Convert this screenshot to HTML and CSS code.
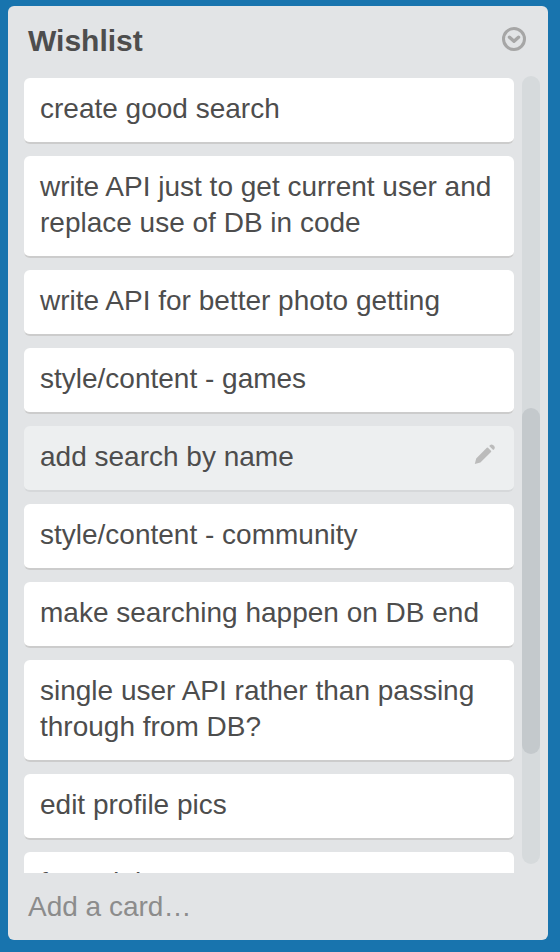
FILE: index.html
```html
<!DOCTYPE html>
<html lang="en">
<head>
<meta charset="utf-8">
<meta name="viewport" content="width=device-width, initial-scale=1">
<title>Wishlist</title>
<link rel="stylesheet" href="styles.css">
</head>
<body>
<section class="list">
  <header class="list-header">
    <h2 class="list-title">Wishlist</h2>
    <button class="icon-button" type="button" aria-label="List actions">
      <svg class="menu-icon" viewBox="0 0 24 24" aria-hidden="true"><circle cx="12" cy="12" r="10.5"/><path d="M7.5 10.2 12 14.2 16.5 10.2"/></svg>
    </button>
  </header>
  <div class="list-body">
    <ul class="cards">
      <li class="card"><a class="card-link" href="#">create good search</a></li>
      <li class="card"><a class="card-link" href="#">write API just to get current user and replace use of DB in code</a></li>
      <li class="card"><a class="card-link" href="#">write API for better photo getting</a></li>
      <li class="card"><a class="card-link" href="#">style/content - games</a></li>
      <li class="card card-active">
        <a class="card-link" href="#">add search by name</a>
        <button class="icon-button edit-button" type="button" aria-label="Edit card">
          <svg class="edit-icon" viewBox="0 0 22 22" aria-hidden="true"><path d="M.8 21 2.2 15.4 12.8 4.8Q13.4 4.2 14 4.8L17 7.8Q17.6 8.4 17 9L6.4 19.4ZM15.2 3 16.2 1.9Q17.6.9 19 1.9L20.2 3.1Q21.4 4.6 20.4 5.9L19.2 6.9Z"/></svg>
        </button>
      </li>
      <li class="card"><a class="card-link" href="#">style/content - community</a></li>
      <li class="card"><a class="card-link" href="#">make searching happen on DB end</a></li>
      <li class="card"><a class="card-link" href="#">single user API rather than passing through from DB?</a></li>
      <li class="card"><a class="card-link" href="#">edit profile pics</a></li>
      <li class="card"><a class="card-link" href="#">form del</a></li>
    </ul>
    <div class="scroll-track"><div class="scroll-thumb"></div></div>
  </div>
  <a class="add-card" href="#">Add a card…</a>
</section>
</body>
</html>
```
FILE: styles.css
```css
* {
  box-sizing: border-box;
}

body {
  display: flex;
  height: 100vh;
  margin: 0;
  padding: 6px 12px 12px 8px;
  background: #1874ae;
  color: #4d4d4d;
  font: 28px/36px "Liberation Sans", Arial, sans-serif;
}

.list {
  display: flex;
  flex: 1;
  flex-direction: column;
  min-width: 0;
  border-radius: 6px;
  background: #e2e4e6;
}

.list-header {
  display: flex;
  align-items: flex-start;
  justify-content: space-between;
  padding: 17px 22px 15px 20px;
}

.list-title {
  margin: 0;
  font-size: 30px;
  line-height: 36px;
}

.icon-button {
  display: flex;
  padding: 0;
  border: 0;
  background: none;
  cursor: pointer;
}

.list-header .icon-button {
  padding-top: 4px;
}

.menu-icon {
  width: 24px;
  height: 24px;
  fill: none;
  stroke: #a6a6a6;
  stroke-width: 3;
  stroke-linecap: round;
  stroke-linejoin: round;
}

.list-body {
  display: flex;
  flex: 1;
  gap: 8px;
  min-height: 0;
  padding: 0 8px 0 16px;
}

.cards {
  display: flex;
  flex: 1;
  flex-direction: column;
  gap: 12px;
  min-width: 0;
  margin: 0;
  padding: 4px 0 0;
  overflow: hidden;
  list-style: none;
}

.card {
  display: flex;
  flex-shrink: 0;
  align-items: center;
  border-bottom: 2px solid #cccccc;
  border-radius: 6px;
  background: #ffffff;
}

.card-link {
  flex: 1;
  padding: 13px 12px 15px 16px;
  color: inherit;
  text-decoration: none;
}

.card-active {
  border-color: #d6d8da;
  background: #edeff0;
}

.edit-button {
  padding: 0 18px 8px 0;
}

.edit-icon {
  width: 22px;
  height: 22px;
  fill: #bbbbbb;
}

.menu-icon path {
  stroke-width: 3.4;
}

.scroll-track {
  display: grid;
  grid-template-rows: 332fr 346fr 110fr;
  width: 18px;
  margin: 2px 0 9px;
  border-radius: 9px;
  background: #d6dadc;
}

.scroll-thumb {
  grid-row: 2;
  border-radius: 9px;
  background: #c4c9cc;
}

.add-card {
  padding: 16px 20px 15px;
  color: #8c8c8c;
  text-decoration: none;
}
```
